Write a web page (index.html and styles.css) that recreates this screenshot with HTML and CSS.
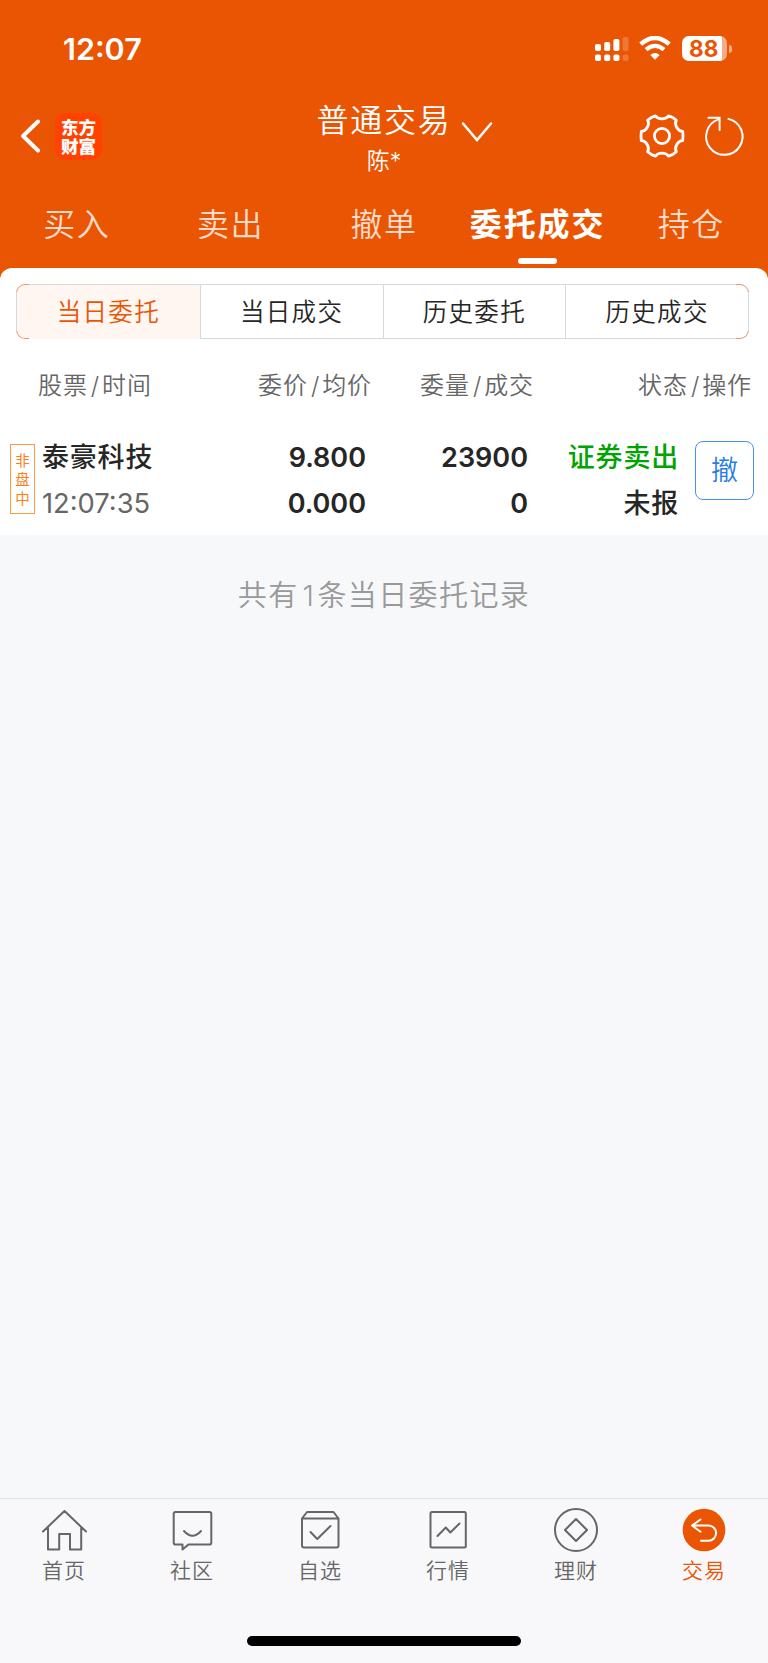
FILE: index.html
```html
<!DOCTYPE html>
<html lang="zh-CN">
<head>
<meta charset="utf-8">
<meta name="viewport" content="width=device-width, initial-scale=1">
<title>普通交易</title>
<link rel="stylesheet" href="styles.css">
</head>
<body>

<div class="header">
  <div class="status">
    <span class="clock">12:07</span>
    <div class="status_icons">
      <svg class="signal" width="34" height="26" viewBox="0 0 34 26" fill="#fff">
        <rect x="0" y="8" width="6" height="7" rx="1.8"/>
        <rect x="9.2" y="6" width="6" height="9" rx="1.8"/>
        <rect x="18.4" y="3" width="6" height="12" rx="1.8"/>
        <rect x="27.6" y="1" width="6" height="14" rx="1.8" opacity=".2"/>
        <rect x="0" y="18.5" width="6" height="6.5" rx="1.8"/>
        <rect x="9.2" y="18.5" width="6" height="6.5" rx="1.8"/>
        <rect x="18.4" y="18.5" width="6" height="6.5" rx="1.8"/>
        <rect x="27.6" y="18.5" width="6" height="6.5" rx="1.8" opacity=".2"/>
      </svg>
      <svg class="wifi" width="32" height="24" viewBox="0 0 32 24">
        <path d="M1.7 8.2Q16-4.2 30.3 8.2" fill="none" stroke="#fff" stroke-width="4.4"/>
        <path d="M7 13.7Q16 6 25 13.7" fill="none" stroke="#fff" stroke-width="4.2"/>
        <path d="M11.3 18.9Q16 15 20.7 18.9L16 23.7Z" fill="#fff"/>
      </svg>
      <div class="battery"><span>88</span></div>
      <i class="battery_tip"></i>
    </div>
  </div>

  <div class="navbar">
    <div class="nav_left">
      <svg width="22" height="36" viewBox="0 0 22 36"><path d="M19 3.5L4 18l15 14.500" fill="none" stroke="#fff" stroke-width="4" stroke-linecap="round" stroke-linejoin="round"/></svg>
      <div class="logo">东方<br>财富</div>
    </div>
    <div class="nav_title">
      <div class="title">普通交易</div>
      <div class="user">陈*</div>
      <svg class="arrow" width="32" height="22" viewBox="0 0 32 22"><path d="M2 2.500L16 19 30 2.500" fill="none" stroke="#fff" stroke-width="2.500" stroke-linecap="round"/></svg>
    </div>
    <div class="nav_right">
      <svg width="46" height="46" viewBox="-23 -23 46 46" fill="none" stroke="#fff" stroke-width="2.800" stroke-linejoin="round">
        <path d="M20.700-4.600Q21.300 0 20.700 4.600C15.900 4.500 11.900 11.500 14.300 15.800Q11 19 6.600 20.200C4 16-4 16-6.600 20.200Q-11 19-14.300 15.800C-11.900 11.500-15.900 4.500-20.700 4.600Q-21.300 0-20.700-4.600C-15.900-4.500-11.900-11.500-14.300-15.800Q-11-19-6.600-20.200C-4-16 4-16 6.600-20.200Q11-19 14.300-15.800C11.900-11.500 15.900-4.500 20.700-4.600Z"/>
        <circle r="7.600"/>
      </svg>
      <svg width="44" height="44" viewBox="0 0 44 44" fill="none" stroke="#fff" stroke-width="2" stroke-linecap="round">
        <path d="M26.400 4.900A18.200 18.200 0 1 1 16.500 5.400"/>
        <path d="M6.500 3.700H17.600V16"/>
      </svg>
    </div>
  </div>

  <div class="tabs">
    <span>买入</span>
    <span>卖出</span>
    <span>撤单</span>
    <span class="active">委托成交</span>
    <span>持仓</span>
  </div>
</div>

<div class="card">
  <div class="segments">
    <span class="active">当日委托</span>
    <span>当日成交</span>
    <span>历史委托</span>
    <span>历史成交</span>
  </div>

  <div class="list_head">
    <span>股票<i>/</i>时间</span>
    <span class="right">委价<i>/</i>均价</span>
    <span class="right">委量<i>/</i>成交</span>
    <span class="right">状态<i>/</i>操作</span>
  </div>

  <div class="order">
    <div class="tag">非<br>盘<br>中</div>
    <div class="cell">
      <b class="name">泰豪科技</b>
      <span class="time">12:07:35</span>
    </div>
    <div class="cell right"><b>9.800</b><b>0.000</b></div>
    <div class="cell right"><b>23900</b><b>0</b></div>
    <div class="cell state right"><b class="sell">证券卖出</b><b>未报</b></div>
    <div class="cancel">撤</div>
  </div>
</div>

<p class="summary">共有<span>1</span>条当日委托记录</p>

<div class="footer">
  <div class="menu">
    <div class="item">
      <svg viewBox="0 0 46 46"><path d="M2 24.500L23.500 4 45 24.500M7 20.500V42.500H18.200V27H29V42.500H40.200V20.500"/></svg>
      <span>首页</span>
    </div>
    <div class="item">
      <svg viewBox="0 0 46 46"><path d="M6.500 5H40.500Q42.300 5 42.300 6.800V35.700Q42.300 37.500 40.500 37.500H19.500L13.500 42.500V37.500H6.500Q4.700 37.500 4.700 35.700V6.800Q4.700 5 6.500 5Z"/><path d="M15 24Q23.500 33.500 32 24"/></svg>
      <span>社区</span>
    </div>
    <div class="item">
      <svg viewBox="0 0 46 46"><path d="M5 11.500L10 5H36.500L41.500 11.500V38.500Q41.500 40.500 39.500 40.500H7Q5 40.500 5 38.500ZM5.500 11.500H41"/><path d="M13.500 25L20.300 32 33.500 19"/></svg>
      <span>自选</span>
    </div>
    <div class="item">
      <svg viewBox="0 0 46 46"><rect x="5.500" y="5" width="35.300" height="35.500" rx="1.500"/><path d="M12.500 29L20.800 20.500 25.300 25.500 34.500 16.500"/></svg>
      <span>行情</span>
    </div>
    <div class="item">
      <svg viewBox="0 0 46 46"><circle cx="23" cy="23" r="21"/><path d="M23 12L34 23 23 34 12 23Z"/></svg>
      <span>理财</span>
    </div>
    <div class="item active">
      <svg viewBox="0 0 46 46"><circle class="disc" cx="23" cy="23" r="21.300"/><path class="back" d="M19.500 12.500L11 18.500 19.500 24.700M11.500 18.500H27.500A7.600 7.600 0 0 1 27.500 33.700H20"/></svg>
      <span>交易</span>
    </div>
  </div>
  <div class="home_bar"></div>
</div>

</body>
</html>
```
FILE: styles.css
```css
* { box-sizing: border-box; }

body {
    margin: 0;
    display: flex;
    flex-direction: column;
    height: 1663px;
    background-color: #f7f8fa;
    background-image: linear-gradient(#ea5504 300px, transparent 300px);
    font-family: Inter, "Noto Sans CJK SC", sans-serif;
    color: #262626;
}

svg { display: block; }

.right { text-align: right; }

/* Orange top area */
.header {
    height: 268px;
    background-color: #ea5504;
    color: #fff;
}

.status {
    display: flex;
    justify-content: space-between;
    height: 98px;
    padding: 30px 36px 0 63px;
}

.clock {
    font-size: 30.5px;
    font-weight: 600;
    line-height: 38px;
}

.status_icons {
    display: flex;
    align-items: flex-start;
    padding-top: 6px;
}

.wifi { margin: 0 11px 0 10px; }

.battery {
    width: 45px;
    height: 25px;
    border-radius: 7px;
    background: linear-gradient(to right, #fff 40px, #f5ab83 40px);
    color: #ea5504;
    font-size: 22.5px;
    font-weight: 700;
    line-height: 26px;
    padding-left: 7px;
}

.battery_tip {
    width: 3px;
    height: 8px;
    margin: 9px 0 0 2px;
    border-radius: 0 4px 4px 0;
    background-color: #f5ab83;
}

.navbar {
    display: grid;
    grid-template-columns: 1fr 140px 1fr;
    height: 88px;
}

.nav_left {
    display: flex;
    align-items: center;
    padding: 0 0 12px 19px;
    gap: 14px;
}

.logo {
    width: 47px;
    height: 47px;
    padding-top: 4px;
    border-radius: 10px;
    background-color: #ff4200;
    font-family: "Noto Sans CJK SC", sans-serif;
    font-size: 17.5px;
    font-weight: 900;
    line-height: 19.5px;
    text-align: center;
}

.nav_title {
    position: relative;
    text-align: center;
    white-space: nowrap;
}

.title {
    font-size: 32px;
    font-weight: 350;
    letter-spacing: 1.7px;
    line-height: 45px;
}

.user {
    font-size: 23px;
    font-weight: 350;
    line-height: 36px;
}

.arrow {
    position: absolute;
    left: 147px;
    top: 23px;
}

.nav_right {
    display: flex;
    justify-content: flex-end;
    align-items: center;
    gap: 17px;
    padding: 0 22px 12px 0;
}

.tabs {
    display: grid;
    grid-template-columns: repeat(5, 1fr);
    text-align: center;
    font-size: 32px;
    font-weight: 350;
    letter-spacing: 1.5px;
    line-height: 78px;
    color: #fddccb;
}

.tabs span {
    position: relative;
    white-space: nowrap;
}

.tabs .active {
    color: #fff;
    font-weight: 700;
    letter-spacing: 1.9px;
}

.tabs .active::after {
    content: "";
    position: absolute;
    left: 57px;
    bottom: 4px;
    width: 39px;
    height: 6px;
    border-radius: 3px;
    background-color: #fff;
}

.tabs .active::after { bottom: 0; }

/* White block with the orders */
.card {
    height: 267px;
    padding-top: 16px;
    border-radius: 12px 12px 0 0;
    background-color: #fff;
}

.segments {
    position: relative;
    display: grid;
    grid-template-columns: repeat(4, 1fr);
    height: 55px;
    margin: 0 19px 0 16px;
    border: 1px solid #d6d9e0;
    border-radius: 9px;
    text-align: center;
    font-size: 24.5px;
    font-weight: 350;
    letter-spacing: 1.3px;
    line-height: 54px;
}

.segments span + span { border-left: 1px solid #d6d9e0; }

.segments .active {
    border-radius: 8px 0 0 8px;
    background-color: #fff5f1;
    color: #ea5504;
}

/* tinted corners of the outline */
.segments::before,
.segments::after {
    content: "";
    position: absolute;
    top: -1px;
    bottom: -1px;
    width: 12px;
    border: 1px solid #f0936a;
    -webkit-mask: linear-gradient(#000 8px, transparent 8px, transparent 47px, #000 47px);
    mask: linear-gradient(#000 8px, transparent 8px, transparent 47px, #000 47px);
}

.segments::before {
    left: -1px;
    border-right: none;
    border-radius: 9px 0 0 9px;
}

.segments::after {
    right: -1px;
    border-left: none;
    border-radius: 0 9px 9px 0;
}

.list_head {
    display: grid;
    grid-template-columns: 150px 184px 162px 218px;
    padding-left: 38px;
    height: 96px;
    font-size: 24px;
    font-weight: 350;
    letter-spacing: 0.9px;
    line-height: 93px;
    color: #666;
}

.list_head i {
    font-style: normal;
    padding: 0 2px 0 3px;
}

.order {
    display: grid;
    grid-template-columns: 25px 127px 204px 162px 151px 58px;
    padding-left: 10px;
}

.tag {
    height: 70px;
    margin-top: 9px;
    padding-top: 6px;
    border: 1px solid #fa9a45;
    color: #fa7f1a;
    font-size: 14.5px;
    line-height: 19px;
    text-align: center;
}

.cell {
    display: flex;
    flex-direction: column;
    font-size: 27px;
    line-height: 45.5px;
    white-space: nowrap;
}

.cell b { font-weight: 600; }

.cell .name {
    padding-left: 7px;
    letter-spacing: 0.8px;
    font-weight: 500;
}

.time {
    padding-left: 7px;
    font-size: 27.3px;
    color: #666;
}

.state b {
    font-weight: 500;
    letter-spacing: 0.8px;
}

.state .sell { color: #00a400; }

.cancel {
    height: 59px;
    margin: 6px -17px 0 16px;
    border: 1px solid #4a90ee;
    border-radius: 8px;
    color: #2a7de8;
    font-size: 27px;
    font-weight: 350;
    line-height: 57px;
    text-align: center;
}

.summary {
    flex: 1;
    margin: 40px 0 0;
    text-align: center;
    font-size: 29px;
    font-weight: 350;
    letter-spacing: 1.4px;
    line-height: 42px;
    color: #999;
}

.summary span { padding: 0 2px 0 4px; }

/* Bottom menu */
.footer {
    height: 165px;
    border-top: 1px solid #e1e2e5;
    background-color: #f8f8fb;
}

.menu {
    display: grid;
    grid-template-columns: repeat(6, 1fr);
    height: 137px;
    padding-top: 8px;
}

.item {
    display: flex;
    flex-direction: column;
    align-items: center;
    font-size: 21px;
    font-weight: 350;
    letter-spacing: 1px;
    line-height: 36px;
    color: #666;
}

.item svg {
    width: 46px;
    height: 46px;
    fill: none;
    stroke: #666;
    stroke-width: 2;
    stroke-linecap: round;
    stroke-linejoin: round;
}

.item.active { color: #ea5504; }

.item .disc {
    fill: #ea5504;
    stroke: none;
}

.item .back { stroke: #fff; }

.home_bar {
    width: 274px;
    height: 10px;
    margin: 0 auto;
    border-radius: 5px;
    background-color: #000;
}
```
